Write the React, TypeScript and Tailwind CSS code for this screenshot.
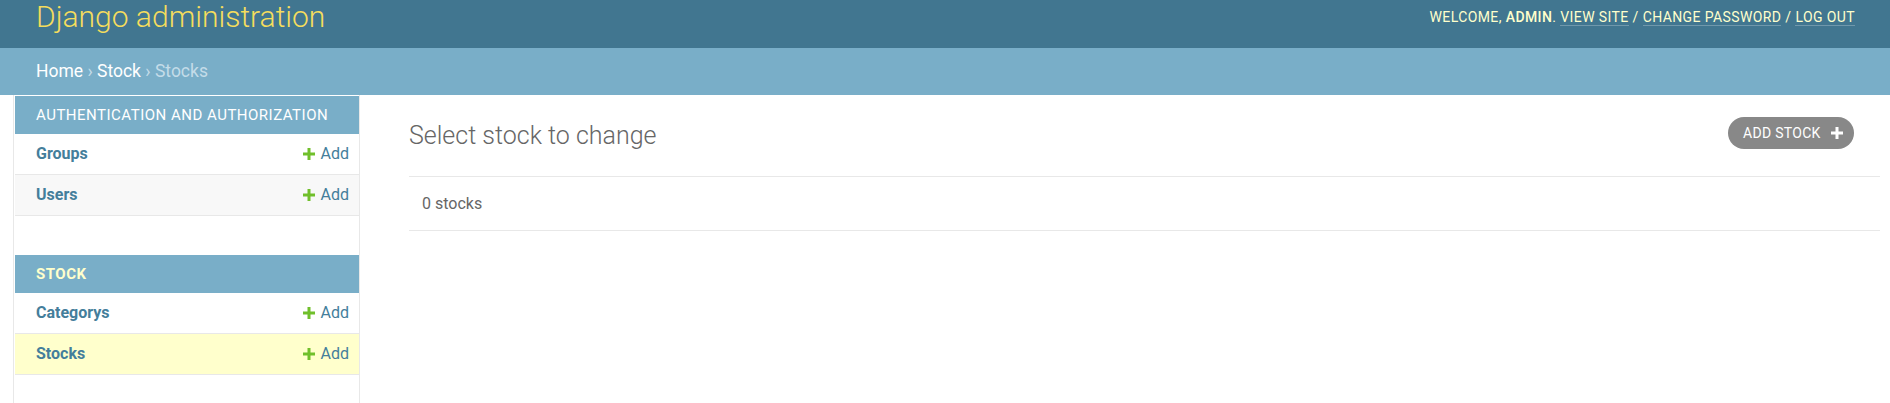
import React from 'react'

const font = { fontFamily: 'Roboto, "Liberation Sans", sans-serif' }

const Plus = ({ color }: { color: string }) => (
  <svg width="12" height="12" viewBox="0 0 12 12" className="shrink-0">
    <path d="M4.5 0h3v4.5H12v3H7.5V12h-3V7.5H0v-3h4.5z" fill={color} />
  </svg>
)

type Row = { name: string; alt?: boolean; current?: boolean }

const Module = ({ title, rows, active }: { title: string; rows: Row[]; active?: boolean }) => (
  <div className="mb-[39px]">
    <div
      className={
        active
          ? 'h-[38px] bg-[#79aec8] px-[21px] flex items-center text-[15px] tracking-[0.5px] uppercase font-bold text-[#ffffcc]'
          : 'h-[38px] bg-[#79aec8] px-[21px] flex items-center text-[15px] tracking-[0.5px] uppercase text-white'
      }
    >
      {title}
    </div>
    {rows.map((r) => (
      <div
        key={r.name}
        className={
          'h-[41px] border-b border-[#e8e8e8] flex items-center justify-between pl-[21px] pr-[10px] ' +
          (r.current ? 'bg-[#ffffcc]' : r.alt ? 'bg-[#f8f8f8]' : 'bg-white')
        }
      >
        <span className="text-[16px] font-bold text-[#447e9b]">{r.name}</span>
        <span className="flex items-center gap-[6px] text-[16px] text-[#447e9b]">
          <Plus color="#70bf2b" />
          Add
        </span>
      </div>
    ))}
  </div>
)

export default function App() {
  return (
    <div className="w-[1890px] h-[403px] overflow-hidden bg-white" style={font}>
      <div className="h-[48px] bg-[#417690] flex justify-between items-start px-[36px]">
        <h1 className="mt-[2px] text-[30px] leading-[30px] font-light text-[#f5dd5d]">Django administration</h1>
        <div className="mt-[10px] mr-[-1px] text-[14px] leading-[14px] tracking-[0.4px] uppercase text-[#ffffcc]">
          Welcome, <strong className="font-medium">admin</strong>.{' '}
          <a className="inline-block pb-[1px] border-b border-white/25">View site</a> /{' '}
          <a className="inline-block pb-[1px] border-b border-white/25">Change password</a> /{' '}
          <a className="inline-block pb-[1px] border-b border-white/25">Log out</a>
        </div>
      </div>

      <div className="h-[47px] bg-[#79aec8] px-[36px] pt-[15px] text-[17.5px] leading-[17.5px] text-[#c4dce8]">
        <a className="text-white">Home</a> › <a className="text-white">Stock</a> › Stocks
      </div>

      <div className="flex h-[308px]">
        <div className="w-[14px] border-r border-[#e8e8e8]" />
        <nav className="w-[346px] pl-px pt-px border-r border-[#e8e8e8]">
          <Module
            title="Authentication and Authorization"
            rows={[{ name: 'Groups' }, { name: 'Users', alt: true }]}
          />
          <Module
            title="Stock"
            active
            rows={[{ name: 'Categorys' }, { name: 'Stocks', current: true }]}
          />
        </nav>

        <main className="flex-1 pl-[49px] pr-[10px] pt-[22px]">
          <div className="flex justify-between items-start">
            <h1 className="mt-[6px] text-[25px] leading-[25px] font-light text-[#666]">Select stock to change</h1>
            <a className="h-[32px] w-[126px] mr-[26px] rounded-full bg-[#888] flex items-center pl-[15px] gap-[10px] text-[14px] tracking-[0.3px] uppercase text-white">
              Add stock
              <Plus color="#ffffff" />
            </a>
          </div>
          <div className="mt-[27px] h-[55px] border-y border-[#e8e8e8] flex items-center pl-[13px] text-[16px] text-[#666]">
            0 stocks
          </div>
        </main>
      </div>
    </div>
  )
}
